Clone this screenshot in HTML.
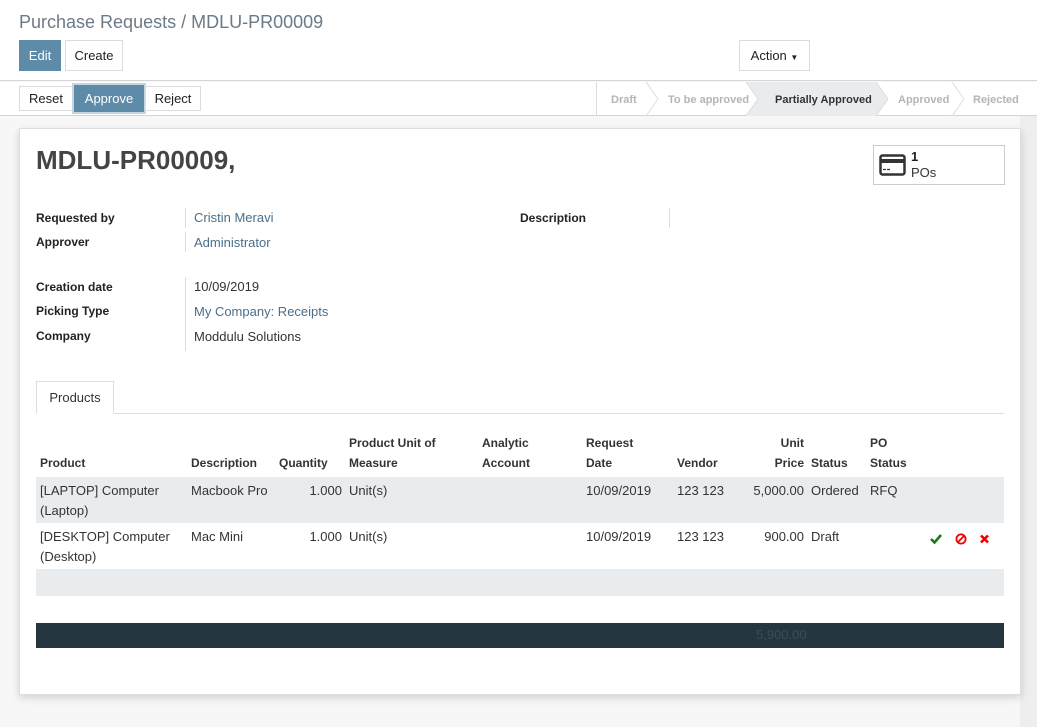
<!DOCTYPE html>
<html><head><style>
*{margin:0;padding:0;box-sizing:border-box}
body{width:1037px;height:727px;position:relative;font-family:"Liberation Sans",sans-serif;font-size:13px;color:#333;background:#f7f7f7;overflow:hidden}
.a{position:absolute;white-space:nowrap}
.btn{position:absolute;height:31px;border:1px solid #dcdcdc;background:#fff;font-size:13px;line-height:29px;text-align:center;color:#222}
.pri{background:#5e8ca8;border-color:#5e8ca8;color:#fff}
.lbl{font-weight:bold;font-size:12px;color:#222}
.lnk{color:#4a6f8a}
.th{position:absolute;font-weight:bold;font-size:12px;color:#333;line-height:20px}
</style></head><body>
<div class="a" style="left:0;top:0;width:1037px;height:81px;background:#fff;border-bottom:1px solid #d5d5d5"></div>
<div class="a" style="left:0;top:82px;width:1037px;height:34px;background:#fff;border-bottom:1px solid #d5d5d5"></div>
<div class="a" style="left:19px;top:12px;font-size:18px;color:#6c7a86">Purchase Requests / MDLU-PR00009</div>
<div class="btn pri" style="left:19px;top:40px;width:42px">Edit</div>
<div class="btn" style="left:65px;top:40px;width:58px">Create</div>
<div class="btn" style="left:739px;top:40px;width:71px">Action <span style="font-size:8px">▼</span></div>
<div class="btn" style="left:19px;top:86px;width:54px;height:25px;line-height:23px">Reset</div>
<div class="btn pri" style="left:74px;top:85px;width:70px;height:27px;line-height:25px;box-shadow:0 0 0 2px #c6d6e0">Approve</div>
<div class="btn" style="left:145px;top:86px;width:56px;height:25px;line-height:23px">Reject</div>
<svg class="a" style="left:596px;top:82px" width="441" height="34">
<polygon points="150,0 280,0 292,17 280,34 150,34 162,17" fill="#e9ecef"/>
<g fill="none" stroke="#ddd"><line x1="0.5" y1="0" x2="0.5" y2="34"/><polyline points="50,0 62,17 50,34"/><polyline points="150,0 162,17 150,34"/><polyline points="280,0 292,17 280,34"/><polyline points="356,0 368,17 356,34"/></g>
<g font-family="Liberation Sans" font-size="11" font-weight="bold" fill="#b5b5b5"><text x="15" y="21">Draft</text><text x="72" y="21">To be approved</text><text x="179" y="21" fill="#333">Partially Approved</text><text x="302" y="21">Approved</text><text x="377" y="21">Rejected</text></g>
</svg>
<div class="a" style="left:1020px;top:116px;width:17px;height:611px;background:#eee"></div>
<div class="a" style="left:19px;top:128px;width:1002px;height:567px;background:#fff;border:1px solid #ddd;box-shadow:0 3px 8px rgba(0,0,0,.15)"></div>
<div class="a" style="left:36px;top:145px;font-size:26px;font-weight:bold;color:#444">MDLU-PR00009,</div>
<div class="a" style="left:873px;top:145px;width:132px;height:40px;border:1px solid #ccc"></div>
<svg class="a" style="left:879px;top:154px" width="27" height="22"><rect x="1.5" y="1.5" width="24" height="19" rx="2" fill="none" stroke="#333" stroke-width="2.5"/><rect x="2" y="5" width="23" height="4" fill="#333"/><line x1="4" y1="15.5" x2="11" y2="15.5" stroke="#333" stroke-width="1.3" stroke-dasharray="3 1"/></svg>
<div class="a" style="left:911px;top:149px;font-weight:bold;font-size:13px;color:#222">1</div>
<div class="a" style="left:911px;top:165px;font-size:13px;color:#333">POs</div>
<div class="a lbl" style="left:36px;top:211px">Requested by</div>
<div class="a lbl" style="left:36px;top:235px">Approver</div>
<div class="a" style="left:185px;top:208px;width:1px;height:20px;background:#ddd"></div>
<div class="a" style="left:185px;top:232px;width:1px;height:20px;background:#ddd"></div>
<div class="a lnk" style="left:194px;top:210px">Cristin Meravi</div>
<div class="a lnk" style="left:194px;top:235px">Administrator</div>
<div class="a lbl" style="left:520px;top:211px">Description</div>
<div class="a" style="left:669px;top:208px;width:1px;height:20px;background:#ddd"></div>
<div class="a lbl" style="left:36px;top:280px">Creation date</div>
<div class="a lbl" style="left:36px;top:304px">Picking Type</div>
<div class="a lbl" style="left:36px;top:329px">Company</div>
<div class="a" style="left:185px;top:277px;width:1px;height:74px;background:#ddd"></div>
<div class="a" style="left:194px;top:279px">10/09/2019</div>
<div class="a lnk" style="left:194px;top:304px">My Company: Receipts</div>
<div class="a" style="left:194px;top:329px">Moddulu Solutions</div>
<div class="a" style="left:36px;top:413px;width:968px;height:1px;background:#ddd"></div>
<div class="a" style="left:36px;top:381px;width:78px;height:33px;border:1px solid #ddd;border-bottom:1px solid #fff;background:#fff;line-height:31px;text-align:center">Products</div>
<div class="th" style="left:40px;top:453px">Product</div>
<div class="th" style="left:191px;top:453px">Description</div>
<div class="th" style="left:279px;top:453px">Quantity</div>
<div class="th" style="left:349px;top:433px">Product Unit of<br>Measure</div>
<div class="th" style="left:482px;top:433px">Analytic<br>Account</div>
<div class="th" style="left:586px;top:433px">Request<br>Date</div>
<div class="th" style="left:677px;top:453px">Vendor</div>
<div class="th" style="left:760px;top:433px;width:44px;text-align:right">Unit<br>Price</div>
<div class="th" style="left:811px;top:453px">Status</div>
<div class="th" style="left:870px;top:433px">PO<br>Status</div>
<div class="a" style="left:36px;top:477px;width:968px;height:46px;background:#e9ecef"></div>
<div class="a" style="left:36px;top:569px;width:968px;height:27px;background:#e9ecef"></div>
<div class="a" style="left:36px;top:623px;width:968px;height:25px;background:#263640"></div>
<div class="a" style="left:756px;top:627px;color:#3d4d57">5,900.00</div>
<div class="a" style="left:40px;top:481px;line-height:20px">[LAPTOP] Computer<br>(Laptop)</div>
<div class="a" style="left:191px;top:481px;line-height:20px">Macbook Pro</div>
<div class="a" style="left:300px;top:481px;width:42px;text-align:right;line-height:20px">1.000</div>
<div class="a" style="left:349px;top:481px;line-height:20px">Unit(s)</div>
<div class="a" style="left:586px;top:481px;line-height:20px">10/09/2019</div>
<div class="a" style="left:677px;top:481px;line-height:20px">123 123</div>
<div class="a" style="left:740px;top:481px;width:64px;text-align:right;line-height:20px">5,000.00</div>
<div class="a" style="left:811px;top:481px;line-height:20px">Ordered</div>
<div class="a" style="left:870px;top:481px;line-height:20px">RFQ</div>
<div class="a" style="left:40px;top:527px;line-height:20px">[DESKTOP] Computer<br>(Desktop)</div>
<div class="a" style="left:191px;top:527px;line-height:20px">Mac Mini</div>
<div class="a" style="left:300px;top:527px;width:42px;text-align:right;line-height:20px">1.000</div>
<div class="a" style="left:349px;top:527px;line-height:20px">Unit(s)</div>
<div class="a" style="left:586px;top:527px;line-height:20px">10/09/2019</div>
<div class="a" style="left:677px;top:527px;line-height:20px">123 123</div>
<div class="a" style="left:740px;top:527px;width:64px;text-align:right;line-height:20px">900.00</div>
<div class="a" style="left:811px;top:527px;line-height:20px">Draft</div>
<svg class="a" style="left:930px;top:532px" width="62" height="14">
<polyline points="1,7 4.5,10.5 11,3" fill="none" stroke="#1a7a1a" stroke-width="2.6"/>
<circle cx="31" cy="7" r="4.6" fill="none" stroke="#e00" stroke-width="1.8"/><line x1="27.8" y1="10.2" x2="34.2" y2="3.8" stroke="#e00" stroke-width="1.8"/>
<path d="M51 3.5L58 10.5M58 3.5L51 10.5" stroke="#e00" stroke-width="2.6"/>
</svg>
</body></html>
